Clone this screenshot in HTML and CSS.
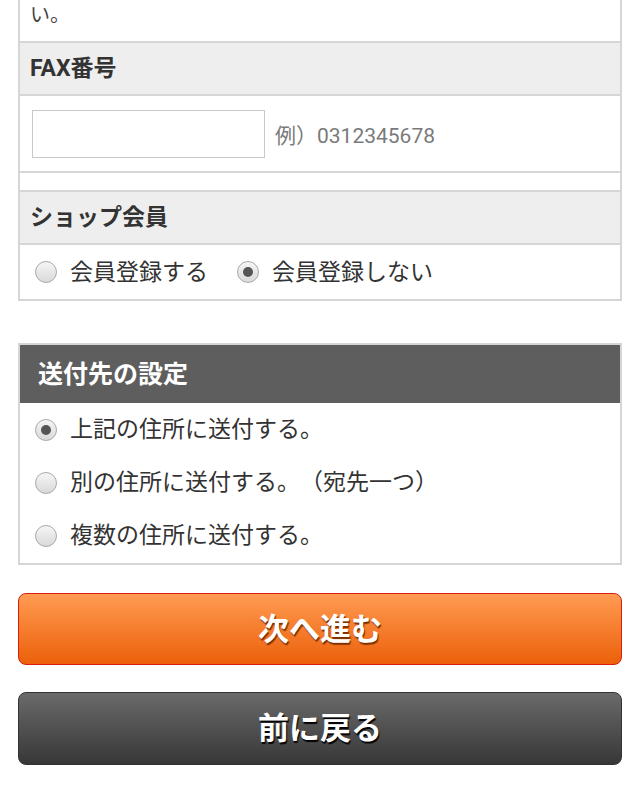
FILE: index.html
```html
<!DOCTYPE html>
<html lang="ja">
<head>
<meta charset="utf-8">
<link rel="stylesheet" href="styles.css">
</head>
<body>
<div class="page">
  <div class="box">
    <div class="cell cell-top">い。</div>
    <div class="head">FAX番号</div>
    <div class="cell cell-input">
      <input class="field" type="text">
      <span class="example">例）0312345678</span>
    </div>
    <div class="cell cell-spacer"></div>
    <div class="head">ショップ会員</div>
    <div class="cell cell-radios">
      <label class="radio"><span class="dot"></span><span class="txt">会員登録する</span></label>
      <label class="radio"><span class="dot on"></span><span class="txt">会員登録しない</span></label>
    </div>
  </div>

  <div class="box box-ship">
    <div class="dark-head">送付先の設定</div>
    <div class="opts">
      <label class="radio opt"><span class="dot on"></span><span class="txt">上記の住所に送付する。</span></label>
      <label class="radio opt"><span class="dot"></span><span class="txt">別の住所に送付する。（宛先一つ）</span></label>
      <label class="radio opt"><span class="dot"></span><span class="txt">複数の住所に送付する。</span></label>
    </div>
  </div>

  <div class="btn btn-next">次へ進む</div>
  <div class="btn btn-back">前に戻る</div>
</div>
</body>
</html>
```

FILE: styles.css
```css
html, body {
  margin: 0;
  padding: 0;
  background: #fff;
}
body {
  font-family: "Roboto", "Noto Sans CJK JP", sans-serif;
  color: #333;
  width: 640px;
  text-spacing-trim: space-all;
}
.page {
  padding: 0 18px;
  display: flex;
  flex-direction: column;
}
.box {
  border: 2px solid #d6d6d6;
  border-top: none;
  display: flex;
  flex-direction: column;
}
.cell {
  background: #fff;
  padding: 0 10px;
  display: flex;
  align-items: center;
}
.cell-top {
  height: 41px;
  align-items: flex-start;
  font-size: 20px;
  line-height: 30px;
  color: #444;
}
.head {
  background: #eeeeee;
  border-top: 2px solid #d6d6d6;
  border-bottom: 2px solid #d6d6d6;
  height: 51px;
  padding: 0 10px;
  display: flex;
  align-items: center;
  font-weight: bold;
  font-size: 23px;
  color: #333;
  line-height: 1;
}
.cell-input {
  height: 75px;
  padding-left: 12px;
  gap: 10px;
}
.field {
  width: 233px;
  height: 48px;
  box-sizing: border-box;
  border: 1px solid #c8c8c8;
  margin: 0;
  padding: 0;
  background: #fff;
}
.example {
  font-size: 21px;
  color: #7a7a7a;
}
.cell-spacer {
  height: 17px;
  border-top: 2px solid #d6d6d6;
}
.cell-radios {
  height: 54px;
  padding-left: 15px;
  gap: 29px;
}
.radio {
  display: flex;
  align-items: center;
  font-size: 23px;
  color: #333;
}
.txt {
  line-height: 1;
}
.dot {
  width: 22px;
  height: 22px;
  box-sizing: border-box;
  border-radius: 50%;
  border: 1px solid #a9a9a9;
  background: linear-gradient(#f6f6f6, #d9d9d9);
  margin-right: 13px;
  position: relative;
  flex: none;
}
.dot.on::after {
  content: "";
  position: absolute;
  left: 5px;
  top: 5px;
  width: 10px;
  height: 10px;
  border-radius: 50%;
  background: #555;
}
.box-ship {
  margin-top: 42px;
  border-top: 2px solid #d6d6d6;
}
.dark-head {
  background: #5e5e5e;
  color: #fff;
  font-weight: bold;
  font-size: 25px;
  line-height: 1;
  height: 58px;
  padding: 0 18px;
  display: flex;
  align-items: center;
}
.opts {
  display: flex;
  flex-direction: column;
  padding-bottom: 1px;
}
.opt {
  height: 53px;
  padding-left: 15px;
}
.btn {
  box-sizing: border-box;
  border-radius: 8px;
  display: flex;
  align-items: center;
  justify-content: center;
  color: #fff;
  font-weight: bold;
  font-size: 31px;
  padding-bottom: 6px;
}
.btn-next {
  margin-top: 28px;
  height: 72px;
  border: 1px solid #d81e0c;
  background: linear-gradient(#ff9b52, #ec600a);
  text-shadow: 1px 2px 1px #7a3000;
}
.btn-back {
  margin-top: 27px;
  height: 73px;
  border: 1px solid #333;
  background: linear-gradient(#6a6a6a, #373737);
  text-shadow: 1px 2px 1px #000;
}
```
